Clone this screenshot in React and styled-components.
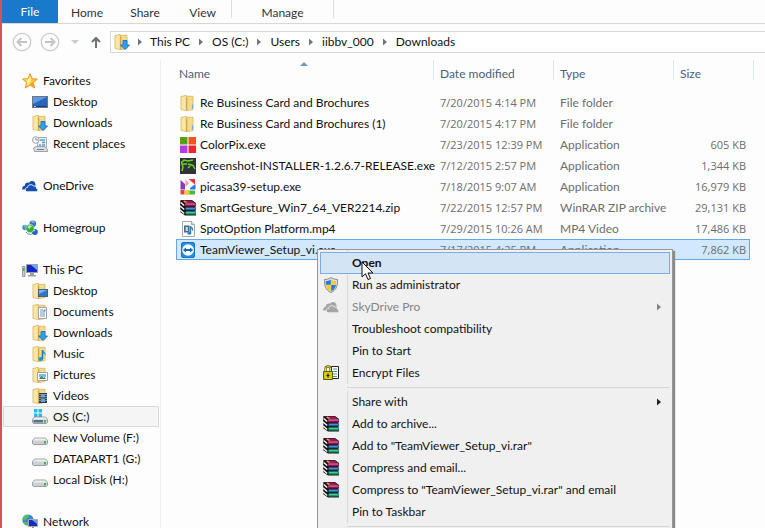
import React, { useState } from "react";
import styled, { createGlobalStyle } from "styled-components";

const GlobalStyle = createGlobalStyle`
  * {
    box-sizing: border-box;
  }

  body {
    margin: 0;
    overflow: hidden;
  }

  body, button {
    font-family: Lato, "Open Sans", sans-serif;
    font-size: 12px;
    line-height: 20px;
    color: #111;
  }

  button {
    background: none;
    border: none;
    margin: 0;
    padding: 0;
    text-align: left;
    white-space: nowrap;
  }
`;

// Styled Components
const Window = styled.div`
  position: relative;
  display: flex;
  flex-direction: column;
  height: 100vh;
  overflow: hidden;
  background: #fdfdfd;
  border-left: 2px solid #d2525f;
`;

const Ribbon = styled.div`
  display: flex;
  height: 24px;
  border-bottom: 1px solid #d5d7d8;
`;

const FileTab = styled.button`
  width: 56px;
  height: 23px;
  text-align: center;
  color: #fff;
  background: #1979ca;
`;

const TabGroup = styled.div`
  display: flex;
  width: ${(props) => props.$width}px;
  height: 18px;
  border-right: 1px solid #dcdfe2;
`;

const Tab = styled.button`
  flex: ${(props) => (props.$fill ? "1" : "0 0 58px")};
  height: 26px;
  color: #333;
  text-align: center;
`;

const NavBar = styled.div`
  display: flex;
  align-items: center;
  flex-shrink: 0;
  height: 36px;
  padding-left: 9px;
`;

const NavButton = styled.button`
  display: flex;
  justify-content: center;
  width: ${(props) => props.$width}px;
`;

const AddressBar = styled.nav`
  flex: 1;
  display: flex;
  align-items: center;
  height: 22px;
  padding-left: 3px;
  background: #fff;
  border: 1px solid #d5d7d8;
  border-right: none;
`;

const CrumbArrow = styled.span`
  display: flex;
  justify-content: center;
  width: 22px;

  &:first-of-type {
    width: 20px;
  }
`;

const Body = styled.div`
  flex: 1;
  display: flex;
  min-height: 0;
`;

const Sidebar = styled.nav`
  flex: 0 0 159px;
  padding: 10px 1px 0;
  border-right: 1px solid #efeff2;
`;

const Tree = styled.ul`
  list-style: none;
  margin: 0 0 21px;
  padding: 0;
`;

const TreeItem = styled.button`
  display: flex;
  align-items: center;
  gap: 5px;
  width: 100%;
  height: 21px;
  padding-left: ${(props) => (props.$nested ? 28 : 18)}px;
  border: 1px solid ${(props) => (props.$selected ? "#dadada" : "transparent")};
  background: ${(props) => (props.$selected ? "#f5f5f5" : "transparent")};
`;

const Content = styled.main`
  flex: 1;
  padding-left: 15px;
`;

const FileTable = styled.table`
  display: block;
  border-spacing: 0;
`;

const HeadRow = styled.tr`
  display: grid;
  grid-template-columns: 258px 120px 120px 80px;
  height: 32px;
`;

const HeadCell = styled.th`
  position: relative;
  height: 20px;
  padding: 4px 0 0 ${(props) => (props.$first ? 3 : 6)}px;
  border-right: 1px solid #dde3ea;
  font-weight: normal;
  text-align: left;
  color: #4c607a;
`;

const SortArrow = styled.svg`
  position: absolute;
  top: 2px;
  left: 50%;
  margin-left: -5px;
`;

const FileRow = styled.tr`
  display: grid;
  grid-template-columns: 257px 120px 120px 75px;
  width: 574px;
  height: 21px;
  border: 1px solid ${(props) => (props.$selected ? "#66a7e8" : "transparent")};
  background: ${(props) => (props.$selected ? "#d1e8ff" : "transparent")};
`;

const Cell = styled.td`
  padding: 0 3px 0 6px;
  line-height: 19px;
  color: #6d6d6d;
  white-space: nowrap;
`;

const NameCell = styled(Cell)`
  display: flex;
  align-items: center;
  gap: 4px;
  padding: 0 3px;
  color: #111;
`;

const DateCell = styled(Cell)`
  font-family: "Open Sans", sans-serif;
  font-size: 11px;
`;

const SizeCell = styled(Cell)`
  font-family: "Open Sans", sans-serif;
  font-size: 11px;
  text-align: right;
`;

const Menu = styled.ul`
  position: absolute;
  top: 249px;
  left: 315px;
  width: 356px;
  list-style: none;
  margin: 0;
  padding: 2px 2px 24px;
  border: 1px solid #979797;
  background: linear-gradient(90deg, #f0f0f0 29px, #d9d9dc 29px, #d9d9dc 30px, #f0f0f0 30px);
  box-shadow: 2px 2px 1px #8a8a8a;
`;

const MenuItem = styled.button`
  display: flex;
  align-items: center;
  width: 100%;
  height: 22px;
  padding: 0 8px 0 2px;
  border: 1px solid ${(props) => (props.$active ? "#78aee5" : "transparent")};
  background: ${(props) => (props.$active ? "#d3e4f5" : "transparent")};
  font-weight: ${(props) => (props.$active ? "bold" : "normal")};
  color: #111;

  &:disabled {
    color: #838383;
  }
`;

const MenuIcon = styled.span`
  display: flex;
  width: 29px;
`;

const MenuLabel = styled.span`
  flex: 1;
`;

const Separator = styled.li`
  height: 7px;
  margin-left: 27px;
  border-top: 3px solid #f0f0f0;
  border-bottom: 3px solid #f0f0f0;
  background: #d7d7d7;
`;

const Cursor = styled.svg`
  position: absolute;
  top: 261px;
  left: 359px;
`;

// Icons
const IconSvg = styled.svg`
  flex-shrink: 0;
`;

const Icon = ({ children }) => (
  <IconSvg width="16" height="16" viewBox="0 0 16 16" aria-hidden="true">
    {children}
  </IconSvg>
);

const folderShape = (
  <>
    <path d="M1 1.500 6 .5l1 .8h6v13.200l-6 1-6-1z" fill="#f0d486" stroke="#d2ad52" strokeWidth=".8" />
    <path d="M1.500 2 5.500 1v14l-4-.8z" fill="#f9e6a4" />
    <path d="M6 2.500 7.500 2v13L6 15.200z" fill="#cfa64b" />
    <path d="M7.500 1.800h5v12.500l-5 .8z" fill="#f4da8c" />
  </>
);

const FolderIcon = () => (
  <Icon>
    {folderShape}
    <path d="M12.500 9.500v4" stroke="#5faee3" strokeWidth="1.200" />
  </Icon>
);

const DownloadsIcon = () => (
  <Icon>
    {folderShape}
    <path d="M9 6.500h4V11h2.500L11 15.600 6.500 11H9z" fill="#35a0ea" stroke="#1672bd" strokeWidth=".9" />
  </Icon>
);

const DesktopFolderIcon = () => (
  <Icon>
    {folderShape}
    <rect x="6.500" y="6.500" width="9" height="7" fill="#2c78c9" stroke="#48627e" />
    <path d="M7 7h8l-8 4z" fill="#73b5ee" />
  </Icon>
);

const DocumentsIcon = () => (
  <Icon>
    {folderShape}
    <path d="M6.500 3.500h8v11h-8z" fill="#fafcff" stroke="#9da4ac" />
    <path d="M8 6h3M8 8h5M8 10h5M8 12h5" stroke="#7b96b8" />
    <path d="M11.500 5.500h2v2h-2z" fill="#4a98da" />
  </Icon>
);

const MusicIcon = () => (
  <Icon>
    {folderShape}
    <path d="M10.500 4v9" stroke="#1878bf" strokeWidth="1.600" />
    <path d="M10.500 3.500c.5 2.500 4 2.500 3 6.500-.5-2-1.500-2.500-3-3z" fill="#2493da" />
    <ellipse cx="8.800" cy="13" rx="2.300" ry="1.900" fill="#2493da" />
  </Icon>
);

const PicturesIcon = () => (
  <Icon>
    {folderShape}
    <path d="M5.500 5.500h10v8h-10z" fill="#fff" stroke="#9da4ac" />
    <path d="M7 7h7v3H7z" fill="#7dbde9" />
    <path d="m7 12 2.500-3 2 2 1-1L14 12z" fill="#477d55" />
  </Icon>
);

const VideosIcon = () => (
  <Icon>
    {folderShape}
    <path d="M7 5h8v10H7z" fill="#333d49" />
    <path d="M9 6h4v3.500H9zM9 10.500h4V14H9z" fill="#5ea7dc" />
    <path d="M8 6v8M14 6v8" stroke="#d8dde2" strokeDasharray="1 1" />
  </Icon>
);

const StarIcon = () => (
  <Icon>
    <path
      d="m8 .7 2.100 5 5.300.4-4 3.500 1.300 5.400L8 12.100 3.300 15l1.300-5.400-4-3.500 5.300-.4z"
      fill="#ffc928"
      stroke="#e58a24"
      strokeWidth=".9"
    />
    <path d="m8 2.500 1.300 4-1.300 4-3.500 2.500 1-4-3-2.500 3.800-.3z" fill="#ffed91" />
    <path d="m8 11 3.800 2.500-1.200-4.200z" fill="#f29a28" />
  </Icon>
);

const MonitorIcon = () => (
  <Icon>
    <rect x=".5" y="2.500" width="15" height="11" fill="#2866bb" stroke="#707780" />
    <path d="M1 3h14L1 10z" fill="#5b9ae3" />
    <path d="M1 12.500h14" stroke="#1c3c68" />
    <path d="M2 12.500h2" stroke="#8ecbf3" />
  </Icon>
);

const RecentIcon = () => (
  <Icon>
    <path d="M5.500 1.500h9v10h-9z" fill="#edf4fa" stroke="#a1aab4" />
    <path d="M8 4h5M10 6.500h3M7 9h2M10 9h3" stroke="#49a4d4" strokeWidth="1.300" />
    <path d="M1.500 12 4 10.500h9l2.500 3v2h-13z" fill="#d9dde0" stroke="#888e94" strokeWidth=".8" />
    <path d="M5 13.500h7" stroke="#777e86" />
    <circle cx="3.800" cy="4" r="3.300" fill="#f7f9fa" stroke="#9aa0a7" />
    <path d="M3.800 2v2H6" stroke="#667380" fill="none" strokeWidth=".8" />
  </Icon>
);

const CloudIcon = ({ color = "#174fb0", gap = "#fdfdfd" }) => (
  <Icon>
    <path d="M.2 11.500c-.4-2.500 1.300-3.700 2.500-3.800C3 5 5.500 4 7 5c1.500-3 6.300-2.500 6.500 1.500v5z" fill={color} />
    <path
      d="M5.500 13.800c-3-.3-3-4.200.1-4.400.2-2.800 4.500-3.800 5.900-1.300 2-.5 3 .8 2.900 2.100 2 .5 1.800 3.400-.2 3.600z"
      fill={color}
      stroke={gap}
      strokeWidth=".9"
    />
  </Icon>
);

const HomegroupIcon = () => (
  <Icon>
    <circle cx="10.800" cy="3.800" r="3.300" fill="#3475c9" />
    <circle cx="3" cy="7.500" r="2.700" fill="#3e91c7" />
    <circle cx="12.800" cy="12" r="3" fill="#2a63b7" />
    <circle cx="8" cy="8.500" r="4.200" fill="#3bab3e" stroke="#e3efe2" strokeWidth=".6" />
    <path d="M5.500 7c1-2 3.500-2.200 4.500-.5L7 9z" fill="#b4e8ac" />
    <path d="M9.500 2.300c1-.8 2.300-.5 2.700.3M2 6.300l1.500-.5M11.500 11l1.500-.6" stroke="#c4ddf5" strokeWidth="1.200" />
    <path d="M4 12c2 3 5 2.500 6 2" stroke="#5b83bd" fill="none" />
  </Icon>
);

const ComputerIcon = () => (
  <Icon>
    <path d="M4.500 2.500h11v8h-11z" fill="#1528c4" stroke="#9a9fa6" />
    <path d="M9 3h6v5z" fill="#78a9f2" />
    <path d="M8 11h4v2h2v1.500H6V13h2z" fill="#9ba0a7" />
    <path d="M.5 4.500H3v10H.5z" fill="#c7cccf" stroke="#858b90" strokeWidth=".8" />
    <path d="M1.800 6v3" stroke="#37aa42" strokeWidth="1.300" />
  </Icon>
);

const driveShape = (
  <>
    <path d="M2.500 8h11l2 2.500v3l-1 1h-13l-1-1v-3z" fill="#ccd0d3" stroke="#888d91" strokeWidth=".8" />
    <path d="M2.800 8.500h10.500L15 10.500H1z" fill="#eceeef" />
    <path d="M12 11h1.800v2.500H12z" fill="#2cb43b" />
  </>
);

const DriveIcon = () => <Icon>{driveShape}</Icon>;

const SystemDriveIcon = () => (
  <Icon>
    <path d="M2 0h3.500v3.500H2zM6.500 0H10v3.500H6.500zM2 4.500h3.500V8H2zM6.500 4.500H10V8H6.500z" fill="#25bce9" />
    {driveShape}
    <path d="M1.500 11H11v2.500H1.500z" fill="#53748b" />
  </Icon>
);

const NetworkIcon = () => (
  <Icon>
    <circle cx="6" cy="6" r="5.600" fill="#3584d7" />
    <path d="M3 1c3-1 5 1 3 2.500S5 6 3 6 0 5 1 3zM2 7.500l4 1-1 3C3 11 1.500 9 2 7.500z" fill="#55bd62" />
    <path d="M6.500 5.500h9v7h-9z" fill="#162dae" stroke="#a6abb1" />
    <path d="m10 6 5 4V6z" fill="#7199e5" />
    <path d="M10 13h2v1.500h2V16H8v-1.500h2z" fill="#8e949b" />
  </Icon>
);

const ColorPixIcon = () => (
  <Icon>
    <path d="M0 0h7.500v7.500H0z" fill="#57a318" />
    <path d="M8.500 0H16v7.500H8.500z" fill="#f5541f" />
    <path d="M0 8.500h7.500V16H0z" fill="#b13de8" />
    <path d="M8.500 8.500H16V16H8.500z" fill="#ee242c" />
    <path d="M2 2h1v1H2zM5 4h1v1H5z" fill="#2f7008" />
  </Icon>
);

const GreenshotIcon = () => (
  <Icon>
    <path d="M0 0h16v16H0z" fill="#30343a" />
    <path d="M1 5 4 2l4 1 5-1M2 13l1-4-1-3h5M8 6l5 1.500L15 11M10 8l-2 2" stroke="#68d41c" strokeWidth="1.500" fill="none" />
  </Icon>
);

const PicasaIcon = () => (
  <Icon>
    <path d="M.5 1 5 5v5.500H.5z" fill="#7d3fc1" />
    <path d="M5.500 0 9 4.500 5.500 8z" fill="#f3a08f" />
    <path d="M8.500 0H15v5.500z" fill="#ed3434" />
    <path d="M15.500 5v5.500H10V9z" fill="#2d7be5" />
    <path d="M.5 15.500V11H4.500v4.500z" fill="#f33d3d" />
    <path d="M5.500 11.500H15v4H5.500z" fill="#49b93f" />
    <path d="M5.500 11.500h4v4h-4z" fill="#f4cc2a" />
  </Icon>
);

const RarIcon = () => (
  <Icon>
    <path d="M.5 0H12l4 3v3l-1 1 1 1v2l-1 1 1 1v3.500H5L0 12l1-1.500L0 8l1-1.500-1-2z" fill="#151515" />
    <path d="M1.500.6h10L15.500 3.500h-10z" fill="#a31758" />
    <path d="M5 4h11v2.400H5z" fill="#960f4c" />
    <path d="M5.500 4h10" stroke="#f0a4c6" strokeWidth=".9" />
    <path d="M5.500 7.700H16v2.500H5.500z" fill="#1d63ac" />
    <path d="M6 8.200h9" stroke="#6fb7ee" strokeWidth=".8" />
    <path d="M5.500 11.500H16v3H5.500z" fill="#159a6a" />
    <path d="M6 12.300h9" stroke="#70e2b6" strokeWidth=".8" />
    <path d="m.7 2.500 3.500 3M.7 6.500 4.200 9.500M.7 10.500l3.500 3" stroke="#fff" strokeWidth="1.300" />
    <path d="m4 1 2.500 1.500" stroke="#e0c633" fill="none" strokeWidth="1.100" />
  </Icon>
);

const MediaIcon = () => (
  <Icon>
    <path d="M2.500.5h9l3 3v12h-12z" fill="#fbfcfd" stroke="#a3a9ae" />
    <path d="M11.500.5v3h3" fill="#dce1e6" stroke="#a3a9ae" />
    <path d="M4 4.500h5.500v7H4z" fill="#4f6b88" />
    <path d="M5.500 6H8v4H5.500z" fill="#aed4ee" />
    <path d="M10.500 5v7M10.500 5.500c1 1.500 2.500 1.500 2 4" stroke="#1f7fd2" strokeWidth="1.300" fill="none" />
    <ellipse cx="9.300" cy="12.300" rx="1.800" ry="1.400" fill="#1f7fd2" />
  </Icon>
);

const TeamViewerIcon = () => (
  <Icon>
    <rect x="1.500" y=".5" width="13" height="15" rx="1.500" fill="#2b8de0" stroke="#1775c8" />
    <circle cx="8" cy="8" r="5.800" fill="#fff" />
    <path d="M2.800 8 6 5.500V7h4V5.500L13.200 8 10 10.500V9H6v1.500z" fill="#1469bd" />
  </Icon>
);

const ShieldIcon = () => (
  <Icon>
    <path d="M8 .5C6 2 3.500 2.500 1.500 2.500c-.3 6 1 10.500 6.500 13 5.500-2.500 6.800-7 6.500-13-2 0-4.500-.5-6.500-2z" fill="#e0e3e6" stroke="#80878e" />
    <path d="M7.800 2.500v5.300H3c-.3-1.500-.3-2.800-.2-3.800 1.800 0 3.500-.5 5-1.500zM8.200 8H13c-.6 3-2.200 5-4.800 6.300z" fill="#2878d5" />
    <path d="M8.200 2.500V7.800H13c.3-1.500.3-2.800.2-3.800-1.800 0-3.500-.5-5-1.500zM7.800 8H3c.6 3 2.200 5 4.800 6.300z" fill="#f9c82c" />
  </Icon>
);

const LockIcon = () => (
  <Icon>
    <path d="M8.500 1.500h7v12h-7z" fill="#fff" stroke="#222" />
    <path d="M10 4h4M10 6.500h4M10 9h4M10 11.500h4" stroke="#4a9a9a" />
    <path d="M2.500 7V4c0-3.500 5-3.500 5 0v3" stroke="#5b5600" strokeWidth="2.200" fill="none" />
    <path d="M2.500 7V4c0-3.500 5-3.500 5 0v3" stroke="#e5dc36" strokeWidth="1" fill="none" />
    <path d="M.5 6.500h9v8h-9z" fill="#d7ca18" stroke="#625d00" />
    <path d="M5 8.500v4M3.500 10.500h3" stroke="#222" strokeWidth="1.200" />
  </Icon>
);

const Chevron = ({ color = "#70767b" }) => (
  <svg width="4" height="8" viewBox="0 0 4 8" aria-hidden="true">
    <path d="M0 0.500 4 4 0 7.500z" fill={color} />
  </svg>
);

const RoundArrow = ({ flip }) => (
  <svg width="20" height="20" viewBox="0 0 20 20" aria-hidden="true">
    <circle cx="10" cy="10" r="8.700" fill="none" stroke="#c9cbcc" strokeWidth="1.300" />
    <path
      d={flip ? "M5 10h9M10.500 6l4 4-4 4" : "M15 10H6M9.500 6l-4 4 4 4"}
      fill="none"
      stroke="#c3c5c6"
      strokeWidth="2"
    />
  </svg>
);

// Explorer Data
const crumbs = ["This PC", "OS (C:)", "Users", "iibbv_000", "Downloads"];

const tree = [
  {
    label: "Favorites",
    icon: StarIcon,
    items: [
      { label: "Desktop", icon: MonitorIcon },
      { label: "Downloads", icon: DownloadsIcon },
      { label: "Recent places", icon: RecentIcon },
    ],
  },
  { label: "OneDrive", icon: CloudIcon, items: [] },
  { label: "Homegroup", icon: HomegroupIcon, items: [] },
  {
    label: "This PC",
    icon: ComputerIcon,
    items: [
      { label: "Desktop", icon: DesktopFolderIcon },
      { label: "Documents", icon: DocumentsIcon },
      { label: "Downloads", icon: DownloadsIcon },
      { label: "Music", icon: MusicIcon },
      { label: "Pictures", icon: PicturesIcon },
      { label: "Videos", icon: VideosIcon },
      { label: "OS (C:)", icon: SystemDriveIcon, selected: true },
      { label: "New Volume (F:)", icon: DriveIcon },
      { label: "DATAPART1 (G:)", icon: DriveIcon },
      { label: "Local Disk (H:)", icon: DriveIcon },
    ],
  },
  { label: "Network", icon: NetworkIcon, items: [] },
];

const files = [
  { name: "Re Business Card and Brochures", date: "7/20/2015 4:14 PM", type: "File folder", size: "", icon: FolderIcon },
  { name: "Re Business Card and Brochures (1)", date: "7/20/2015 4:17 PM", type: "File folder", size: "", icon: FolderIcon },
  { name: "ColorPix.exe", date: "7/23/2015 12:39 PM", type: "Application", size: "605 KB", icon: ColorPixIcon },
  { name: "Greenshot-INSTALLER-1.2.6.7-RELEASE.exe", date: "7/12/2015 2:57 PM", type: "Application", size: "1,344 KB", icon: GreenshotIcon },
  { name: "picasa39-setup.exe", date: "7/18/2015 9:07 AM", type: "Application", size: "16,979 KB", icon: PicasaIcon },
  { name: "SmartGesture_Win7_64_VER2214.zip", date: "7/22/2015 12:57 PM", type: "WinRAR ZIP archive", size: "29,131 KB", icon: RarIcon },
  { name: "SpotOption Platform.mp4", date: "7/29/2015 10:26 AM", type: "MP4 Video", size: "17,486 KB", icon: MediaIcon },
  { name: "TeamViewer_Setup_vi.exe", date: "7/17/2015 4:25 PM", type: "Application", size: "7,862 KB", icon: TeamViewerIcon },
];

const GreyCloudIcon = () => <CloudIcon color="#a5a5a5" gap="#f0f0f0" />;

const menuGroups = [
  [
    { label: "Open" },
    { label: "Run as administrator", icon: ShieldIcon },
    { label: "SkyDrive Pro", icon: GreyCloudIcon, disabled: true, submenu: true },
    { label: "Troubleshoot compatibility" },
    { label: "Pin to Start" },
    { label: "Encrypt Files", icon: LockIcon },
  ],
  [
    { label: "Share with", submenu: true },
    { label: "Add to archive...", icon: RarIcon },
    { label: 'Add to "TeamViewer_Setup_vi.rar"', icon: RarIcon },
    { label: "Compress and email...", icon: RarIcon },
    { label: 'Compress to "TeamViewer_Setup_vi.rar" and email', icon: RarIcon },
    { label: "Pin to Taskbar" },
  ],
  [],
];

const TreeButton = ({ item, nested }) => (
  <li>
    <TreeItem $nested={nested} $selected={item.selected}>
      <item.icon />
      {item.label}
    </TreeItem>
  </li>
);

const ContextMenu = () => {
  const [active, setActive] = useState("Open");

  return (
    <Menu>
      {menuGroups.map((group, i) => (
        <React.Fragment key={i}>
          {i > 0 && <Separator />}
          {group.map((item) => (
            <li key={item.label}>
              <MenuItem
                $active={active === item.label}
                disabled={item.disabled}
                onFocus={() => setActive(item.label)}
              >
                <MenuIcon>{item.icon && <item.icon />}</MenuIcon>
                <MenuLabel>{item.label}</MenuLabel>
                {item.submenu && <Chevron color={item.disabled ? "#838383" : "#222"} />}
              </MenuItem>
            </li>
          ))}
        </React.Fragment>
      ))}
    </Menu>
  );
};

const App = () => {
  return (
    <Window>
      <GlobalStyle />
      <Ribbon>
        <FileTab>File</FileTab>
        <TabGroup $width={174}>
          <Tab>Home</Tab>
          <Tab>Share</Tab>
          <Tab $fill>View</Tab>
        </TabGroup>
        <TabGroup $width={102}>
          <Tab $fill>Manage</Tab>
        </TabGroup>
      </Ribbon>

      <NavBar>
        <NavButton $width={22} aria-label="Back">
          <RoundArrow />
        </NavButton>
        <NavButton $width={34} aria-label="Forward">
          <RoundArrow flip />
        </NavButton>
        <NavButton $width={15} aria-label="Recent locations">
          <svg width="8" height="4" viewBox="0 0 8 4">
            <path d="M0 0h8L4 4z" fill="#c9cbcc" />
          </svg>
        </NavButton>
        <NavButton $width={28} aria-label="Up">
          <svg width="10" height="12" viewBox="0 0 10 12">
            <path d="M5 12V2M1 6l4-4 4 4" stroke="#6d7378" strokeWidth="2" fill="none" />
          </svg>
        </NavButton>
        <AddressBar aria-label="Address">
          <DownloadsIcon />
          {crumbs.map((crumb) => (
            <React.Fragment key={crumb}>
              <CrumbArrow>
                <Chevron />
              </CrumbArrow>
              <button>{crumb}</button>
            </React.Fragment>
          ))}
        </AddressBar>
      </NavBar>

      <Body>
        <Sidebar>
          {tree.map((group) => (
            <Tree key={group.label}>
              <TreeButton item={group} />
              {group.items.map((item) => (
                <TreeButton key={item.label} item={item} nested />
              ))}
            </Tree>
          ))}
        </Sidebar>

        <Content>
          <FileTable>
            <thead>
              <HeadRow>
                <HeadCell $first>
                  Name
                  <SortArrow width="8" height="4" viewBox="0 0 8 4">
                    <path d="M0 4 4 0l4 4z" fill="#6f9cbd" />
                  </SortArrow>
                </HeadCell>
                <HeadCell>Date modified</HeadCell>
                <HeadCell>Type</HeadCell>
                <HeadCell>Size</HeadCell>
              </HeadRow>
            </thead>
            <tbody>
              {files.map((file) => (
                <FileRow key={file.name} $selected={file.name.startsWith("TeamViewer")}>
                  <NameCell>
                    <file.icon />
                    {file.name}
                  </NameCell>
                  <DateCell>{file.date}</DateCell>
                  <Cell>{file.type}</Cell>
                  <SizeCell>{file.size}</SizeCell>
                </FileRow>
              ))}
            </tbody>
          </FileTable>
        </Content>
      </Body>

      <ContextMenu />
      <Cursor width="13" height="20" viewBox="0 0 13 20">
        <path d="M1 1v15l3.500-3.300L7 18.500l2.500-1L7 12h5z" fill="#fff" stroke="#111" />
      </Cursor>
    </Window>
  );
};

export default App;
